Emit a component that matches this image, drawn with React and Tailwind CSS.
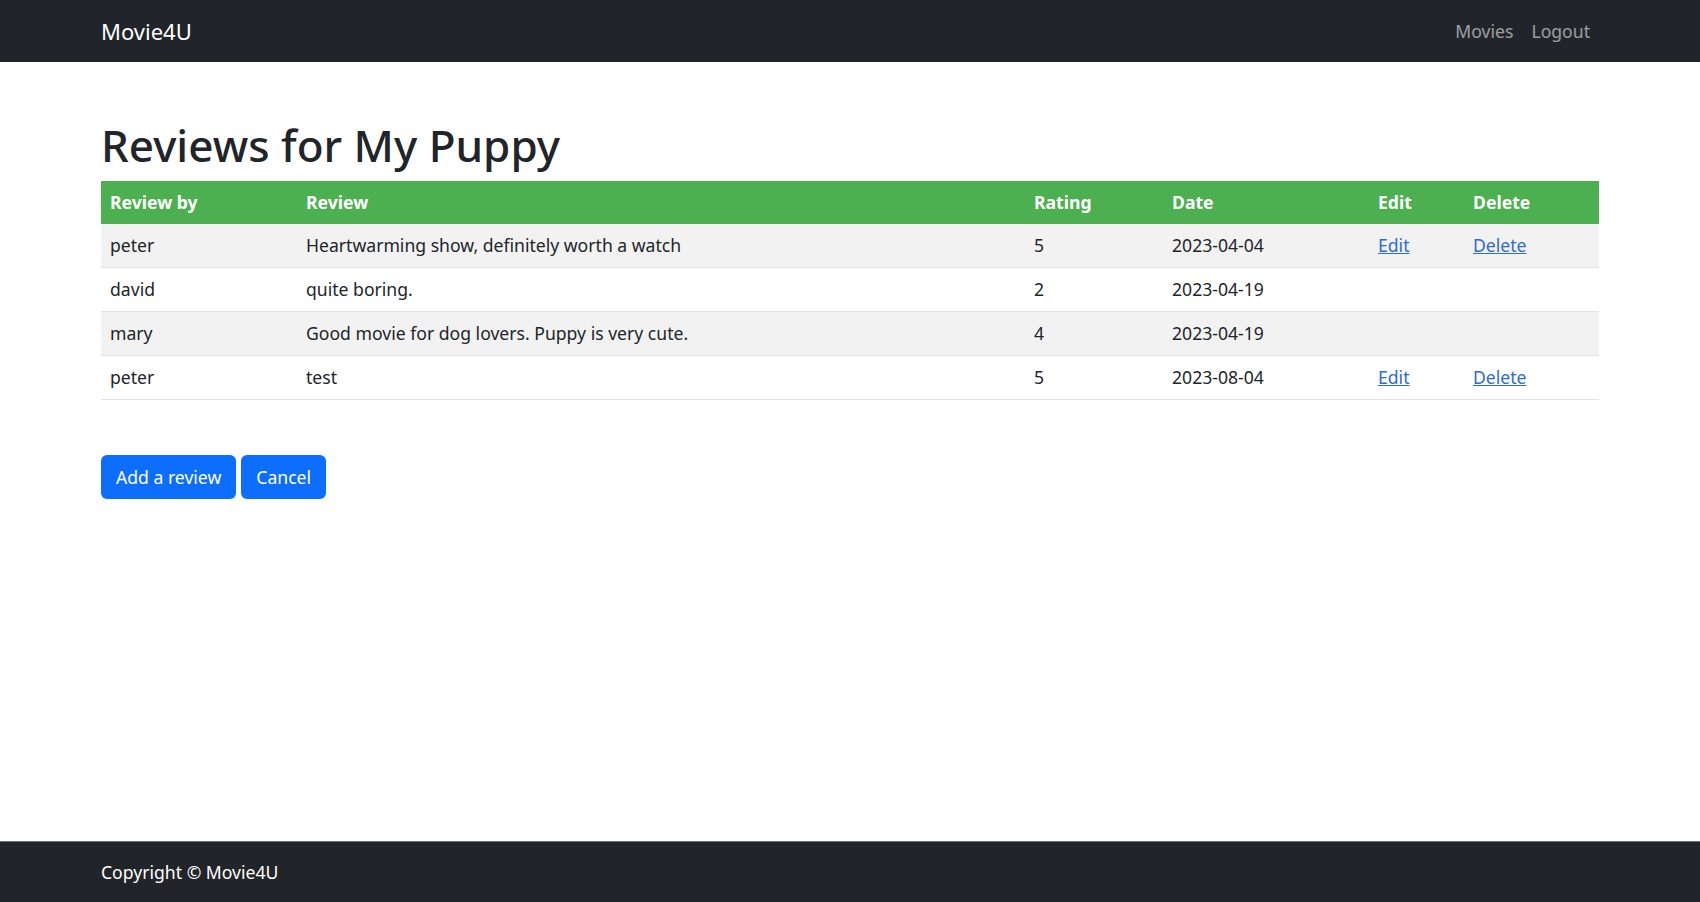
import React from 'react';

const REVIEWS = [
  { user: "peter", text: "Heartwarming show, definitely worth a watch", rating: 5, date: "2023-04-04", own: true },
  { user: "david", text: "quite boring.", rating: 2, date: "2023-04-19", own: false },
  { user: "mary", text: "Good movie for dog lovers. Puppy is very cute.", rating: 4, date: "2023-04-19", own: false },
  { user: "peter", text: "test", rating: 5, date: "2023-08-04", own: true },
];

const font = { fontFamily: '"Segoe UI", "Noto Sans", "Liberation Sans", sans-serif' };

export default function App() {
  return (
    <div className="h-screen flex flex-col bg-white text-[#212529] text-[17.6px] leading-[1.5]" style={font}>
      <nav className="h-[62px] flex-shrink-0 bg-[#212529] flex items-center justify-between px-[101px]">
        <span className="text-[22px] text-white">Movie4U</span>
        <div className="flex items-center">
          <a className="px-[9px] text-white/55">Movies</a>
          <a className="px-[9px] text-white/55">Logout</a>
        </div>
      </nav>

      <main className="flex-1 px-[101px] pt-[57px]">
        <h1 className="text-[44px] font-medium leading-[1.2] mb-[9px]">Reviews for My Puppy</h1>
        <table className="w-full border-collapse text-left">
          <thead>
            <tr className="bg-[#4caf50] text-white">
              <th className="w-[196px] px-[9px] py-[8.5px] font-bold">Review by</th>
              <th className="w-[728px] px-[9px] py-[8.5px] font-bold">Review</th>
              <th className="w-[138px] px-[9px] py-[8.5px] font-bold">Rating</th>
              <th className="w-[206px] px-[9px] py-[8.5px] font-bold">Date</th>
              <th className="w-[95px] px-[9px] py-[8.5px] font-bold">Edit</th>
              <th className="px-[9px] py-[8.5px] font-bold">Delete</th>
            </tr>
          </thead>
          <tbody>
            {REVIEWS.map((r, i) => (
              <tr key={i} className={`border-b border-[#dee2e6] ${i % 2 === 0 ? "bg-[#f2f2f2]" : "bg-white"}`}>
                <td className="px-[9px] py-[8.3px]">{r.user}</td>
                <td className="px-[9px] py-[8.3px]">{r.text}</td>
                <td className="px-[9px] py-[8.3px]">{r.rating}</td>
                <td className="px-[9px] py-[8.3px]">{r.date}</td>
                <td className="px-[9px] py-[8.3px]">{r.own && <a className="text-[#2f6bd1] underline">Edit</a>}</td>
                <td className="px-[9px] py-[8.3px]">{r.own && <a className="text-[#2f6bd1] underline">Delete</a>}</td>
              </tr>
            ))}
          </tbody>
        </table>
        <div className="mt-[55px] flex gap-[5px]">
          <button className="h-[44px] px-[15px] rounded-[6px] bg-[#0d6efd] text-white">Add a review</button>
          <button className="h-[44px] px-[15px] rounded-[6px] bg-[#0d6efd] text-white">Cancel</button>
        </div>
      </main>

      <footer className="h-[61px] flex-shrink-0 bg-[#212529] border-t border-[#6c6f73] flex items-center px-[101px]">
        <span className="text-white">Copyright © Movie4U</span>
      </footer>
    </div>
  );
}
